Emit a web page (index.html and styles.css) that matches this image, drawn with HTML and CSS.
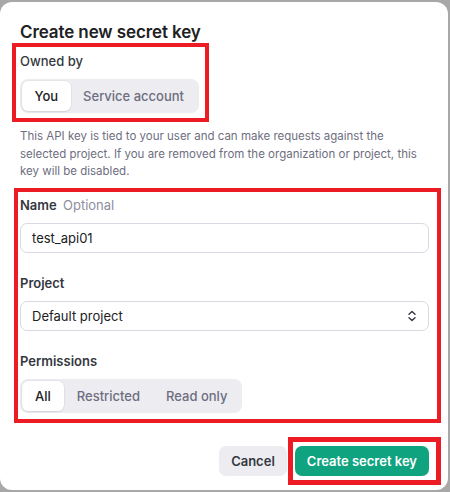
FILE: index.html
```html
<!DOCTYPE html>
<html lang="en">
<head>
<meta charset="utf-8">
<title>Create new secret key</title>
<link rel="stylesheet" href="styles.css">
</head>
<body>
<div class="modal">
  <h1 class="title">Create new secret key</h1>

  <div class="field owned">
    <div class="label">Owned by</div>
    <div class="segmented">
      <span class="seg active">You</span>
      <span class="seg">Service account</span>
    </div>
  </div>

  <p class="note">This API key is tied to your user and can make requests against the selected project. If you are removed from the organization or project, this key will be disabled.</p>

  <div class="field">
    <div class="label">Name <span class="optional">Optional</span></div>
    <div class="input">test_api01</div>
  </div>

  <div class="field">
    <div class="label">Project</div>
    <div class="input select">
      <span>Default project</span>
      <svg class="chev" width="10" height="12" viewBox="0 0 10 12" fill="none" stroke="#353740" stroke-width="1.4" stroke-linecap="round" stroke-linejoin="round"><path d="M2 4.2 L5 1.5 L8 4.2"/><path d="M2 7.8 L5 10.5 L8 7.8"/></svg>
    </div>
  </div>

  <div class="field">
    <div class="label">Permissions</div>
    <div class="segmented perms">
      <span class="seg active">All</span>
      <span class="seg">Restricted</span>
      <span class="seg">Read only</span>
    </div>
  </div>

  <div class="footer">
    <button class="btn cancel">Cancel</button>
    <button class="btn primary">Create secret key</button>
  </div>

  <div class="mark mark-owned"></div>
  <div class="mark mark-fields"></div>
  <div class="mark mark-create"></div>
</div>
</body>
</html>
```

FILE: styles.css
```css
html, body {
  margin: 0;
  padding: 0;
}
body {
  background: #a8a8a8;
  width: 450px;
  height: 492px;
  overflow: hidden;
  font-family: Inter, "Noto Sans", sans-serif;
  color: #202123;
}
.modal {
  position: relative;
  box-sizing: border-box;
  margin-top: 2px;
  width: 448px;
  height: 488px;
  background: #fff;
  border-radius: 12px;
  padding: 18px 19px 0 20px;
}
.title {
  margin: 0;
  font-size: 17px;
  line-height: 24px;
  font-weight: 600;
  letter-spacing: -0.1px;
}
.field {
  display: flex;
  flex-direction: column;
  align-items: flex-start;
  gap: 8px;
  margin-top: 20px;
}
.field.owned {
  margin-top: 7px;
}
.label {
  font-size: 13px;
  line-height: 20px;
  font-weight: 600;
  color: #353740;
}
.owned .label {
  font-weight: 500;
}
.optional {
  font-weight: 400;
  color: #8e8ea0;
  margin-left: 3px;
}
.segmented {
  display: flex;
  background: #ececf1;
  border-radius: 8px;
  padding: 2px;
}
.seg {
  font-size: 13px;
  line-height: 30px;
  height: 30px;
  padding: 0 12.5px;
  font-weight: 500;
  color: #6e6e80;
  border-radius: 6px;
}
.perms .seg {
  padding: 0 13px;
}
.seg.active {
  background: #fff;
  color: #202123;
  box-shadow: 0 0 0 0.5px rgba(0,0,0,0.06), 0 1px 2px rgba(0,0,0,0.08);
}
.note {
  margin: 15px 0 0;
  max-width: 408px;
  font-size: 11.5px;
  line-height: 17.5px;
  color: #6e6e80;
}
.field + .field {
  margin-top: 20px;
}
.note + .field {
  margin-top: 14px;
}
.input {
  box-sizing: border-box;
  align-self: stretch;
  height: 30px;
  border: 1px solid #d9d9e3;
  border-radius: 7px;
  padding: 0 11px;
  font-size: 13px;
  line-height: 28px;
  color: #202123;
}
.select {
  display: flex;
  align-items: center;
  justify-content: space-between;
}
.footer {
  display: flex;
  justify-content: flex-end;
  gap: 8px;
  margin-top: 33px;
}
.btn {
  height: 30px;
  border: none;
  border-radius: 7px;
  padding: 0 12px;
  font-family: inherit;
  font-size: 13px;
  font-weight: 600;
}
.cancel {
  background: #ececf1;
  color: #353740;
}
.primary {
  background: #10a37f;
  color: #fff;
}
.mark {
  position: absolute;
  box-sizing: border-box;
  border: 4px solid #ed1c24;
}
.mark-owned {
  left: 12px;
  top: 41px;
  width: 197px;
  height: 79px;
}
.mark-fields {
  left: 14px;
  top: 186px;
  width: 427px;
  height: 235px;
}
.mark-create {
  left: 288px;
  top: 435px;
  width: 153px;
  height: 48px;
  border-width: 5px;
}
```
